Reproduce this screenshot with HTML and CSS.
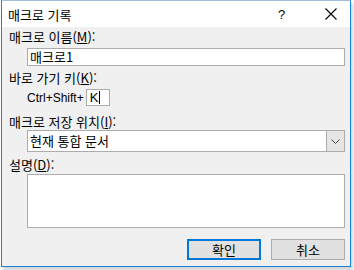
FILE: index.html
```html
<!DOCTYPE html>
<html lang="ko">
<head>
<meta charset="utf-8">
<link rel="stylesheet" href="styles.css">
</head>
<body>
<div class="dialog">
  <div class="titlebar">
    <span class="title">매크로 기록</span>
    <span class="help">?</span>
    <span class="close">
      <svg width="12" height="12" viewBox="0 0 12 12"><path d="M0.5 0.5 L11.5 11.5 M11.5 0.5 L0.5 11.5" stroke="#000" stroke-width="1.1" fill="none"/></svg>
    </span>
  </div>
  <div class="content">
    <div class="label l1">매크로 이름(<u>M</u>):</div>
    <div class="field name">매크로1</div>
    <div class="label l2">바로 가기 키(<u>K</u>):</div>
    <div class="shortcut">
      <span class="latin">Ctrl+Shift+</span>
      <span class="keybox"><span class="latin">K</span><span class="caret"></span></span>
    </div>
    <div class="label l3">매크로 저장 위치(<u>I</u>):</div>
    <div class="select">
      <span class="selval">현재 통합 문서</span>
      <span class="drop">
        <svg width="9" height="5" viewBox="0 0 9 5"><path d="M0.5 0.5 L4.5 4.5 L8.5 0.5" stroke="#444" stroke-width="1" fill="none"/></svg>
      </span>
    </div>
    <div class="label l4">설명(<u>D</u>):</div>
    <div class="field desc"></div>
    <div class="buttons">
      <div class="btn ok">확인</div>
      <div class="btn cancel">취소</div>
    </div>
  </div>
</div>
</body>
</html>
```
FILE: styles.css
```css
html, body {
  margin: 0;
  padding: 0;
  background: #ffffff;
}
body {
  width: 354px;
  height: 270px;
  font-family: "Noto Sans CJK KR", "Noto Sans", sans-serif;
  font-size: 13px;
  color: #000;
}
.dialog {
  box-sizing: border-box;
  margin-left: 1px;
  width: 350px;
  height: 267px;
  border: 1px solid #1883d7;
  border-top-color: #9fbcd8;
  background: #f0f0f0;
  box-shadow: 2px 3px 3px rgba(0,0,0,0.18);
  display: flex;
  flex-direction: column;
}
.titlebar {
  height: 26px;
  background: #ffffff;
  display: flex;
  align-items: center;
  padding-left: 6px;
}
.title {
  flex: 1;
  line-height: 16px;
  padding-top: 1px;
}
.help {
  font-family: "Liberation Sans", sans-serif;
  font-size: 13px;
  width: 12px;
  margin-right: 35px;
  padding-top: 1px;
}
.close {
  width: 12px;
  height: 12px;
  margin-right: 13px;
  display: flex;
}
.content {
  padding: 2px 4px 0 7px;
  display: flex;
  flex-direction: column;
}
.label {
  line-height: 16px;
  height: 16px;
}
.label u {
  text-underline-offset: 1px;
}
.field {
  box-sizing: border-box;
  margin-left: 18px;
  width: 318px;
  background: #fff;
  border: 1px solid #acacac;
}
.name {
  height: 18px;
  margin-top: 3px;
  line-height: 16px;
  padding-left: 2px;
}
.l2 { margin-top: 4px; }
.shortcut {
  margin-top: 3px;
  margin-left: 18px;
  height: 17px;
  display: flex;
  align-items: center;
}
.latin {
  font-family: "Liberation Sans", "Noto Sans", sans-serif;
  font-size: 12px;
}
.keybox {
  box-sizing: border-box;
  margin-left: 2px;
  width: 24px;
  height: 17px;
  background: #fff;
  border: 1px solid #acacac;
  display: flex;
  align-items: center;
  padding-left: 3px;
}
.keybox .latin {
  font-size: 13px;
}
.caret {
  width: 1px;
  height: 13px;
  background: #000;
  margin-left: 1px;
}
.l3 { margin-top: 8px; }
.select {
  box-sizing: border-box;
  margin-left: 18px;
  width: 318px;
  height: 22px;
  background: #fff;
  border: 1px solid #acacac;
  display: flex;
  align-items: stretch;
}
.selval {
  flex: 1;
  line-height: 19px;
  padding-left: 2px;
}
.drop {
  width: 17px;
  background: #e5e5e5;
  border-left: 1px solid #acacac;
  display: flex;
  align-items: center;
  justify-content: center;
}
.l4 { margin-top: 5px; }
.desc {
  height: 54px;
  margin-top: 1px;
}
.buttons {
  margin-top: 11px;
  display: flex;
  justify-content: flex-end;
  gap: 10px;
  padding-right: 1px;
}
.btn {
  box-sizing: border-box;
  width: 74px;
  height: 21px;
  background: #e1e1e1;
  border: 1px solid #adadad;
  display: flex;
  align-items: center;
  justify-content: center;
  line-height: 16px;
}
.ok {
  border: 2px solid #0078d7;
}
```
